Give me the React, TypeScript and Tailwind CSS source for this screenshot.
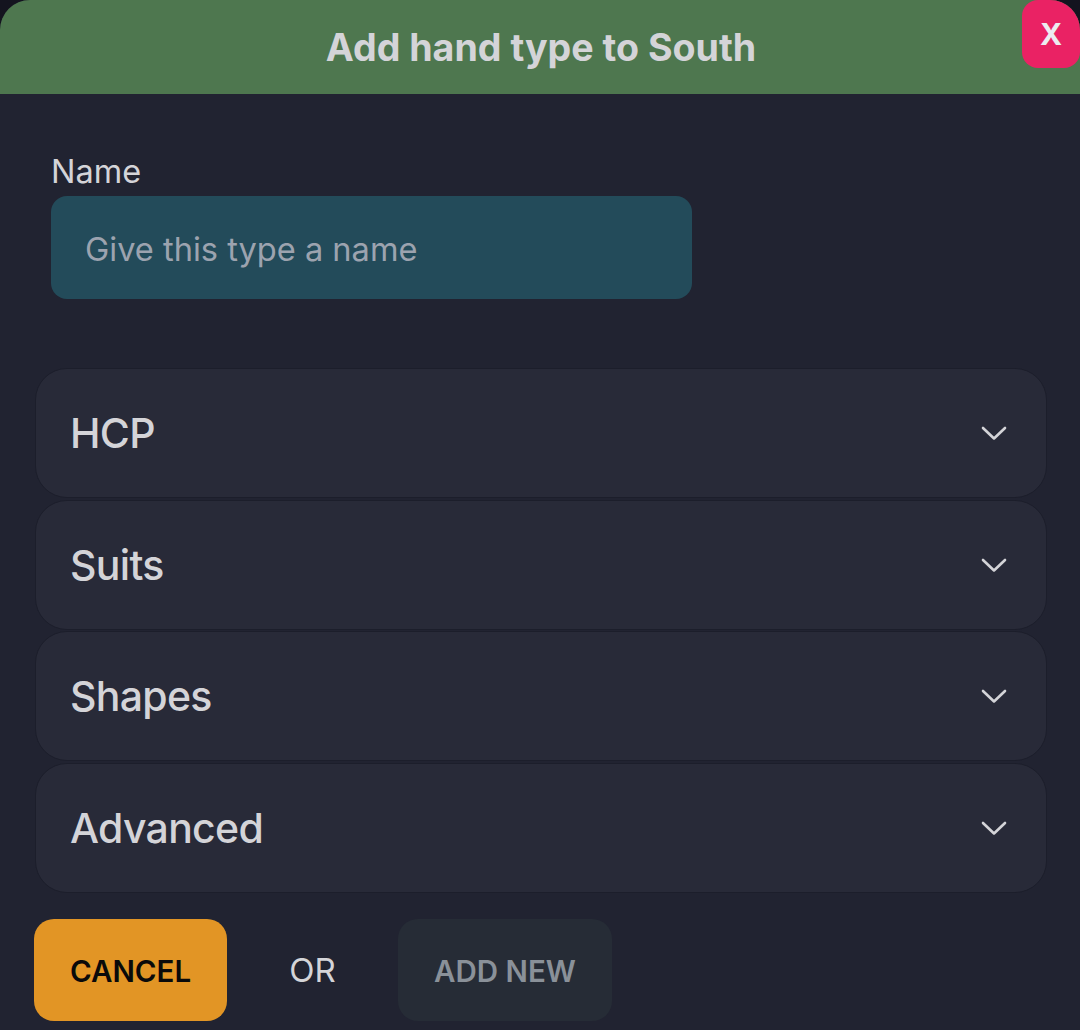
import React from "react";

function Chevron() {
  return (
    <svg width="28" height="16" viewBox="0 0 28 16" fill="none" className="shrink-0">
      <path d="M3 3 L14 13.5 L25 3" stroke="#d4d4d8" strokeWidth="2.6" strokeLinecap="round" strokeLinejoin="round" />
    </svg>
  );
}

function Section({ title }: { title: string }) {
  return (
    <div className="h-[130px] flex items-center justify-between pl-[34px] pr-[38px] bg-[#282a38] border border-[#1c1e2b] rounded-[32px]">
      <span className="mt-[1px] text-[41px] font-medium tracking-[-0.7px] text-[#d4d4d8] leading-none">{title}</span>
      <Chevron />
    </div>
  );
}

export default function App() {
  return (
    <div className="w-[1080px] h-[1030px] bg-[#14141f] overflow-hidden" style={{ fontFamily: "Inter, 'Liberation Sans', sans-serif" }}>
      <div className="relative w-full h-full bg-[#212331] rounded-t-[30px] overflow-hidden flex flex-col">
        <div className="h-[94px] shrink-0 bg-[#4e774f] flex items-center justify-center pl-[2px] pt-[2px]">
          <h1 className="text-[37.6px] font-bold text-[#d4d4d8] leading-none">Add hand type to South</h1>
        </div>
        <button className="absolute top-0 right-0 w-[58px] h-[68px] rounded-[16px] bg-[#ea2264] text-[#ececf0] text-[30px] font-bold flex items-center justify-center">
          X
        </button>
        <div className="flex flex-col pt-[56px] pl-[35px] pr-[33px]">
          <label className="pl-[16px] text-[32.5px] text-[#d4d4d8] leading-[44px]">Name</label>
          <div className="ml-[16px] mt-[2px] w-[641px] h-[103px] rounded-[16px] bg-[#234b5a] flex items-center pl-[34px] pt-[4px]">
            <span className="text-[32.6px] text-[#9ca3af] leading-none">Give this type a name</span>
          </div>
          <div className="mt-[69px] flex flex-col gap-[1.67px]">
            <Section title="HCP" />
            <Section title="Suits" />
            <Section title="Shapes" />
            <Section title="Advanced" />
          </div>
          <div className="mt-[26px] -ml-px flex items-center">
            <button className="w-[193px] h-[102px] rounded-[20px] bg-[#e29525] text-[#0a0a0a] text-[29.5px] font-semibold flex items-center justify-center pt-[2px]">
              CANCEL
            </button>
            <span className="mt-[2px] w-[171px] text-center text-[33px] text-[#d4d4d8]">OR</span>
            <button className="w-[214px] h-[102px] rounded-[20px] bg-[#262c36] text-[#8a9199] text-[29.5px] font-semibold flex items-center justify-center pt-[2px]">
              ADD NEW
            </button>
          </div>
        </div>
      </div>
    </div>
  );
}
